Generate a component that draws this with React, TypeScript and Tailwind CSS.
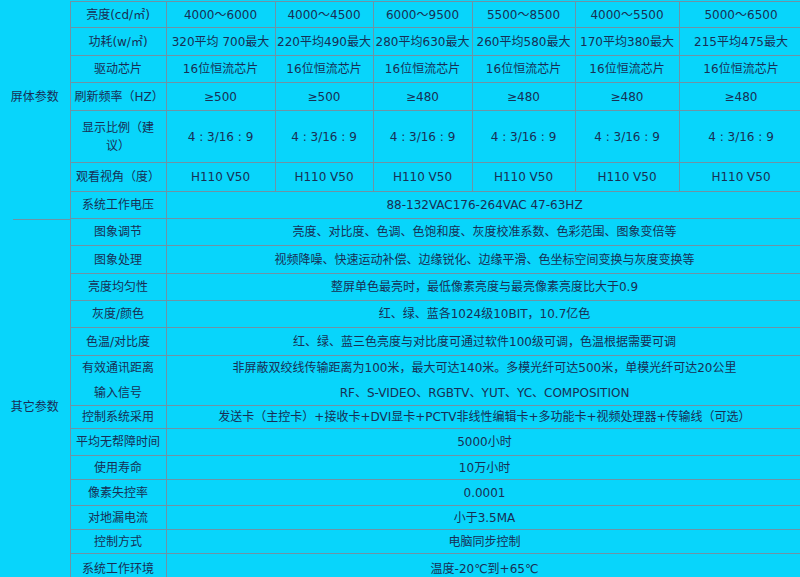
const line = 'border border-[#6d93a6]';

type Row = { label: string; values: string[]; h: string; noBottom?: boolean; noTop?: boolean };

const screenRows: Row[] = [
  { label: '亮度(cd/㎡)', values: ['4000～6000', '4000～4500', '6000～9500', '5500～8500', '4000～5500', '5000～6500'], h: 'h-[26px]' },
  { label: '功耗(w/㎡)', values: ['320平均 700最大', '220平均490最大', '280平均630最大', '260平均580最大', '170平均380最大', '215平均475最大'], h: 'h-[28px]' },
  { label: '驱动芯片', values: Array(6).fill('16位恒流芯片'), h: 'h-[27px]' },
  { label: '刷新频率（HZ）', values: ['≥500', '≥500', '≥480', '≥480', '≥480', '≥480'], h: 'h-[28px]' },
  { label: '显示比例（建议）', values: Array(6).fill('4 : 3/16 : 9'), h: 'h-[52px]' },
  { label: '观看视角（度）', values: Array(6).fill('H110 V50'), h: 'h-[29px]' },
  { label: '系统工作电压', values: ['88-132VAC176-264VAC 47-63HZ'], h: 'h-[27px]' },
];

const otherRows: Row[] = [
  { label: '图象调节', values: ['亮度、对比度、色调、色饱和度、灰度校准系数、色彩范围、图象变倍等'], h: 'h-[27px]' },
  { label: '图象处理', values: ['视频降噪、快速运动补偿、边缘锐化、边缘平滑、色坐标空间变换与灰度变换等'], h: 'h-[28px]' },
  { label: '亮度均匀性', values: ['整屏单色最亮时，最低像素亮度与最亮像素亮度比大于0.9'], h: 'h-[27px]' },
  { label: '灰度/颜色', values: ['红、绿、蓝各1024级10BIT，10.7亿色'], h: 'h-[27px]' },
  { label: '色温/对比度', values: ['红、绿、蓝三色亮度与对比度可通过软件100级可调，色温根据需要可调'], h: 'h-[28px]' },
  { label: '有效通讯距离', values: ['非屏蔽双绞线传输距离为100米，最大可达140米。多模光纤可达500米，单模光纤可达20公里'], h: 'h-[25px]', noBottom: true },
  { label: '输入信号', values: ['RF、S-VIDEO、RGBTV、YUT、YC、COMPOSITION'], h: 'h-[25px]', noTop: true },
  { label: '控制系统采用', values: ['发送卡（主控卡）+接收卡+DVI显卡+PCTV非线性编辑卡+多功能卡+视频处理器+传输线（可选）'], h: 'h-[23px]' },
  { label: '平均无帮障时间', values: ['5000小时'], h: 'h-[27px]' },
  { label: '使用寿命', values: ['10万小时'], h: 'h-[24px]' },
  { label: '像素失控率', values: ['0.0001'], h: 'h-[26px]' },
  { label: '对地漏电流', values: ['小于3.5MA'], h: 'h-[24px]' },
  { label: '控制方式', values: ['电脑同步控制'], h: 'h-[24px]' },
  { label: '系统工作环境', values: ['温度-20℃到+65℃'], h: 'h-[30px]' },
];

// centred full-width brackets like the original bitmap font
const jp = "font-['DejaVu_Sans','Noto_Sans_CJK_JP',sans-serif]";

function SpecRow({ row, group }: { row: Row; group?: { label: string; span: number; cls: string } }) {
  const edge = `${row.noBottom ? 'border-b-0' : ''} ${row.noTop ? 'border-t-0' : ''}`;
  return (
    <tr className={row.h}>
      {group && (
        <td rowSpan={group.span} className={`border-r border-[#6d93a6] p-0 text-center align-middle ${group.cls}`}>
          {group.label}
        </td>
      )}
      <td className={`${line} ${edge} px-1 py-0 text-center ${row.label.includes('（') ? jp : ''}`}>
        {row.label === '显示比例（建议）' ? (
          <>
            显示比例（建
            <br />
            议）
          </>
        ) : (
          row.label
        )}
      </td>
      {row.values.map((v, i) => (
        <td
          key={i}
          colSpan={row.values.length === 1 ? 6 : 1}
          className={`${line} ${edge} whitespace-pre p-0 text-center`}
        >
          {v}
        </td>
      ))}
    </tr>
  );
}

export default function App() {
  return (
    <div
      className="h-[577px] w-[800px] overflow-hidden bg-[#08d5fb] pt-[1px] text-[12px] leading-[18px] text-[#182f55]"
      style={{ fontFamily: '"DejaVu Sans", "Noto Sans CJK SC", sans-serif' }}
    >
      <table className="w-[803px] table-fixed border-collapse">
        <colgroup>
          <col className="w-[70px]" />
          <col className="w-[96px]" />
          <col className="w-[109px]" />
          <col className="w-[98px]" />
          <col className="w-[99px]" />
          <col className="w-[103px]" />
          <col className="w-[104px]" />
          <col className="w-[124px]" />
        </colgroup>
        <tbody>
          {screenRows.map((row, i) => (
            <SpecRow
              key={row.label}
              row={row}
              group={i === 0 ? { label: '屏体参数', span: screenRows.length, cls: 'pb-[26px]' } : undefined}
            />
          ))}
          {otherRows.map((row, i) => (
            <SpecRow
              key={row.label}
              row={row}
              group={
                i === 0
                  ? {
                      label: '其它参数',
                      span: otherRows.length,
                      cls: 'pt-[11px] bg-[linear-gradient(to_right,transparent_13px,#6d93a6_13px)] bg-[length:100%_1px] bg-no-repeat',
                    }
                  : undefined
              }
            />
          ))}
        </tbody>
      </table>
    </div>
  );
}
